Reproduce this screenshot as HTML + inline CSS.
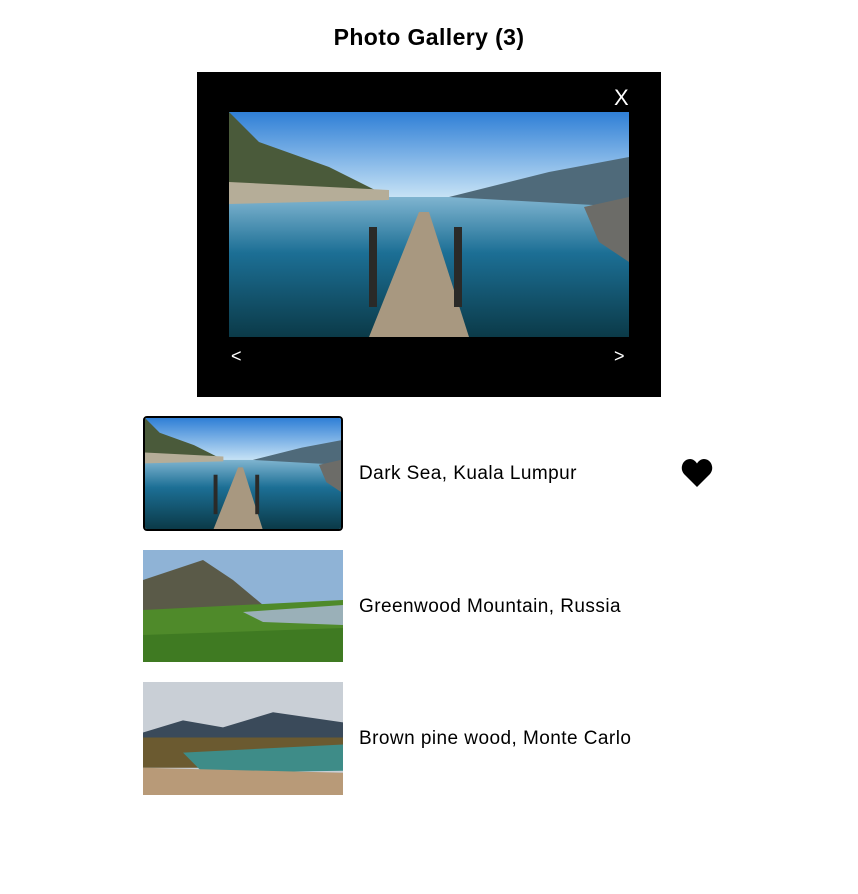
<!DOCTYPE html>
<html><head><meta charset="utf-8"><style>
*{margin:0;padding:0;box-sizing:border-box}
body{width:858px;height:894px;background:#fff;font-family:"Liberation Sans",sans-serif;position:relative;overflow:hidden}
h1{position:absolute;top:24px;left:0;width:858px;text-align:center;font-size:23px;letter-spacing:0.4px;font-weight:bold;color:#000}
.box{position:absolute;left:197px;top:72px;width:464px;height:325px;background:#000}
.t{position:absolute;color:#fff;font-size:20px}
.big{position:absolute;left:32px;top:40px;width:400px;height:225px}
.th{position:absolute;left:143px;width:200px;height:112px;overflow:hidden}
.lbl{position:absolute;left:359px;font-size:19px;letter-spacing:0.45px;color:#000}
</style></head><body>
<svg width="0" height="0" style="position:absolute"><defs>
<linearGradient id="sky" x1="0" y1="0" x2="0" y2="1"><stop offset="0" stop-color="#2f7fd6"/><stop offset="1" stop-color="#cfe8f7"/></linearGradient>
<linearGradient id="sea" x1="0" y1="0" x2="0" y2="1"><stop offset="0" stop-color="#7fb4d0"/><stop offset=".4" stop-color="#1c6f95"/><stop offset="1" stop-color="#0b3a48"/></linearGradient>
<symbol id="seaimg" viewBox="0 0 400 225" preserveAspectRatio="none">
<rect width="400" height="90" fill="url(#sky)"/>
<rect y="85" width="400" height="140" fill="url(#sea)"/>
<path d="M0 0 L30 30 L100 55 L160 85 L0 90Z" fill="#4a5a3a"/>
<path d="M0 70 L160 78 L160 88 L0 92Z" fill="#b5ad98"/>
<path d="M220 85 L320 60 L400 45 L400 95Z" fill="#4f6a7a"/>
<path d="M355 95 L400 85 L400 150 L370 130Z" fill="#6c6c68"/>
<path d="M190 100 L200 100 L240 225 L140 225Z" fill="#a89880"/>
<rect x="140" y="115" width="8" height="80" fill="#2a2a28"/>
<rect x="225" y="115" width="8" height="80" fill="#2a2a28"/>
</symbol>
<symbol id="mtn" viewBox="0 0 200 112" preserveAspectRatio="none">
<rect width="200" height="112" fill="#8fb3d6"/>
<path d="M0 30 L30 20 L60 10 L90 30 L120 55 L0 70Z" fill="#5a5a48"/>
<path d="M0 60 L200 50 L200 112 L0 112Z" fill="#4f8a2a"/>
<path d="M100 62 L200 55 L200 75 L120 72Z" fill="#9ab0b8"/>
<path d="M0 85 L200 78 L200 112 L0 112Z" fill="#3f7a22"/>
</symbol>
<symbol id="pine" viewBox="0 0 200 112" preserveAspectRatio="none">
<rect width="200" height="112" fill="#c9cfd6"/>
<path d="M0 50 L40 38 L80 45 L130 30 L200 40 L200 60 L0 60Z" fill="#3a4a5a"/>
<rect y="55" width="200" height="30" fill="#6b5a30"/>
<path d="M40 70 L200 62 L200 88 L60 90Z" fill="#3e8c88"/>
<path d="M0 85 L200 90 L200 112 L0 112Z" fill="#b89a78"/>
</symbol>
</defs></svg>
<h1>Photo Gallery (3)</h1>
<div class="box">
<div class="t" style="left:417px;top:13px;font-size:22px">X</div>
<svg class="big"><use href="#seaimg" width="400" height="225"/></svg>
<div class="t" style="left:34px;top:274px;font-size:18px">&lt;</div>
<div class="t" style="left:417px;top:274px;font-size:18px">&gt;</div>
</div>
<div class="th" style="top:416px;height:115px;border:2px solid #000;border-radius:4px"><svg width="196" height="111"><use href="#seaimg" width="196" height="111"/></svg></div>
<div class="lbl" style="top:463px">Dark Sea, Kuala Lumpur</div>
<svg style="position:absolute;left:681px;top:458px" width="32" height="30" viewBox="0 0 32 30"><path d="M16 29 L3 16 C-2 10 2 1 9 1 C12 1 14.5 3 16 5.5 C17.5 3 20 1 23 1 C30 1 34 10 29 16Z" fill="#000"/></svg>
<div class="th" style="top:550px"><svg width="200" height="112"><use href="#mtn" width="200" height="112"/></svg></div>
<div class="lbl" style="top:596px">Greenwood Mountain, Russia</div>
<div class="th" style="top:682px;height:113px"><svg width="200" height="113"><use href="#pine" width="200" height="113"/></svg></div>
<div class="lbl" style="top:728px">Brown pine wood, Monte Carlo</div>
</body></html>
